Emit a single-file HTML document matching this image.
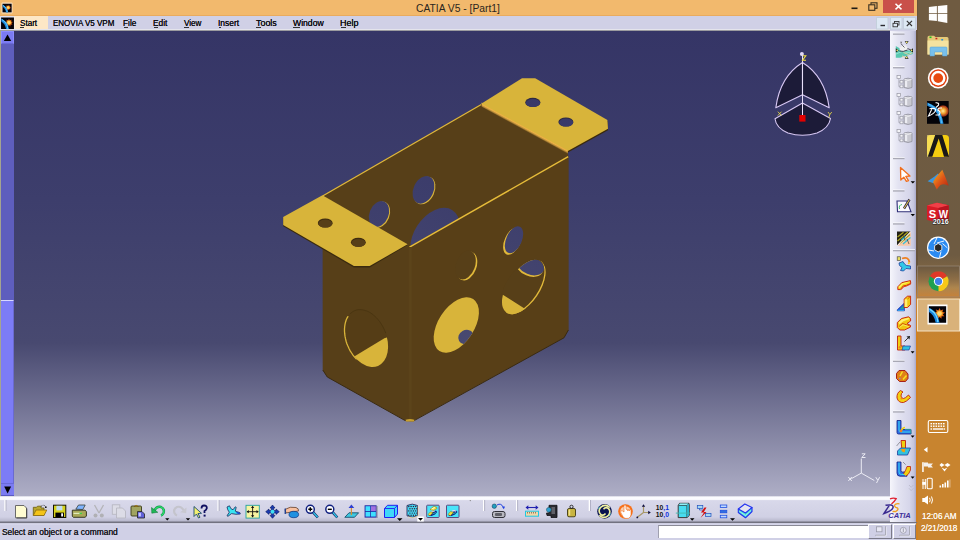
<!DOCTYPE html>
<html><head><meta charset="utf-8">
<style>
*{margin:0;padding:0;box-sizing:border-box}
html,body{width:960px;height:540px;overflow:hidden;background:#d0d0e6;font-family:"Liberation Sans",sans-serif}
.a{position:absolute}
.t{position:absolute;white-space:nowrap;transform-origin:0 0;line-height:1}
#title{left:0;top:0;width:917px;height:16px;background:#f2b96d;border-bottom:1px solid #e9ab5f}
#menubar{left:0;top:16px;width:917px;height:14px;background:#d0d0e6}
#menuline{left:0;top:29px;width:890px;height:2px;background:linear-gradient(#e4e4ec 0,#e4e4ec 0.6px,#a4a4a8 1.2px,#8a8a90 2px)}
.mi{font-size:9.6px;color:#101018;text-shadow:0 0 0.2px #000}
.ul{position:absolute;height:1px;background:#333;top:27px}
#vp{left:14px;top:31px;width:876px;height:465px;background:linear-gradient(to bottom,#353566 0px,#3d3e6c 169px,#484970 312px,#aeaec6 465px)}
#lsb{left:0;top:31px;width:14px;height:465px;background:#5e5ebd;border-left:1px solid #a4a490}
#rtb{left:890px;top:31px;width:26px;height:491px;background:linear-gradient(to right,#f6f6fc 0,#e4e4f2 30%,#d6d6ea 75%,#c4c4dc 92%,#a8a8c8 100%)}
#btb{left:0;top:496px;width:890px;height:27px;background:linear-gradient(to bottom,#b4b4c8 0,#fbfbff 0.8px,#fbfbff 3.4px,#d8d8ea 4.6px,#d0d0e4 21px,#c4c4d8 23px,#b8b8cc 25.2px,#727280 25.8px,#727280 27px)}
#btb2{left:890px;top:521.6px;width:27px;height:1.4px;background:#727280}
#status{left:0;top:523px;width:916px;height:17px;background:linear-gradient(#c8c8da 0,#d6d6ea 1.2px,#d4d4ea 2px,#d0d0e6 2.5px)}
#tbar{left:916px;top:0;width:44px;height:540px;background:linear-gradient(to bottom,#6f5b41 0,#6e5b42 255px,#8a6c44 282px,#c08036 300px,#c8842f 340px,#c8842f 540px)}
#frame{left:914px;top:0;width:3px;height:16px;background:#f2b96d}
</style></head><body>
<div class="a" id="tbar"></div>
<div class="a" style="left:916px;top:0;width:2px;height:540px;background:linear-gradient(to bottom,#66523a 0,#66523a 270px,#c88030 300px,#d08020 340px,#d08020 540px)"></div>
<div class="a" id="title"></div>
<div class="a" id="frame"></div>
<div class="t" style="left:416px;top:4.1px;font-size:10.3px;color:#2a2620">CATIA V5 - [Part1]</div>
<div class="a" style="left:883px;top:0;width:31px;height:13px;background:#c9504a"></div>
<div class="a" id="menubar"></div>
<div class="a" style="left:14px;top:16px;width:34px;height:14px;background:#fde7c6"></div>
<div class="a" id="menuline"></div>
<span class="t mi" style="left:19.5px;top:18.2px;transform:scaleX(0.844)">Start</span>
<span class="t mi" style="left:52.8px;top:18.2px;transform:scaleX(0.834)">ENOVIA V5 VPM</span>
<span class="t mi" style="left:123.4px;top:18.2px;transform:scaleX(0.863)">File</span>
<span class="t mi" style="left:153px;top:18.2px;transform:scaleX(0.872)">Edit</span>
<span class="t mi" style="left:183.8px;top:18.2px;transform:scaleX(0.844)">View</span>
<span class="t mi" style="left:218.1px;top:18.2px;transform:scaleX(0.881)">Insert</span>
<span class="t mi" style="left:255.6px;top:18.2px;transform:scaleX(0.928)">Tools</span>
<span class="t mi" style="left:292.7px;top:18.2px;transform:scaleX(0.900)">Window</span>
<span class="t mi" style="left:340.3px;top:18.2px;transform:scaleX(0.938)">Help</span>
<div class="ul" style="left:20px;width:4px"></div>
<div class="ul" style="left:124px;width:3.5px"></div>
<div class="ul" style="left:153.5px;width:4px"></div>
<div class="ul" style="left:184px;width:5px"></div>
<div class="ul" style="left:219px;width:2px"></div>
<div class="ul" style="left:256px;width:5px"></div>
<div class="ul" style="left:293px;width:7px"></div>
<div class="ul" style="left:341px;width:5px"></div>
<div class="a" id="vp"></div>
<svg class="a" style="left:0;top:0" width="960" height="540" viewBox="0 0 960 540">
<defs>
<linearGradient id="bg" gradientUnits="userSpaceOnUse" x1="0" y1="31" x2="0" y2="496">
<stop offset="0" stop-color="#353566"/><stop offset="0.363" stop-color="#3d3e6c"/><stop offset="0.671" stop-color="#484970"/><stop offset="1" stop-color="#aeaec6"/>
</linearGradient>
<clipPath id="cpA"><ellipse cx="456.3" cy="325" rx="31" ry="18" transform="rotate(-57 456.3 325)"/></clipPath>
<clipPath id="cpD"><ellipse cx="523.8" cy="287" rx="31" ry="16" transform="rotate(-56 523.8 287)"/></clipPath>
<clipPath id="cpE"><ellipse cx="366.3" cy="338.3" rx="20" ry="30" transform="rotate(-23 366.3 338.3)"/></clipPath>
<clipPath id="cpFW"><polygon points="409.5,246.5 568.4,156 568.4,330 564,337.5 415.2,419.6 414,421.2 409.5,421.2"/></clipPath>
</defs>
<!-- interior / body -->
<polygon fill="#573f18" points="322.6,196 481.3,104.5 567.9,152 568.4,157 568.4,330 564,337.5 415.2,419.6 414,421.2 406,421.2 404.8,420.2 327.3,377 322.7,370"/>
<!-- back wall holes -->
<ellipse cx="380" cy="214.6" rx="9.5" ry="13.5" transform="rotate(22 380 214.6)" fill="#d8b43a"/>
<ellipse cx="379" cy="214" rx="9.5" ry="13.5" transform="rotate(22 379 214)" fill="url(#bg)"/>
<ellipse cx="424.5" cy="190.5" rx="10" ry="14.5" transform="rotate(25 424.5 190.5)" fill="#d8b43a"/>
<ellipse cx="423.5" cy="189.8" rx="10" ry="14.5" transform="rotate(25 423.5 189.8)" fill="url(#bg)"/>
<ellipse cx="435" cy="237" rx="21" ry="32" transform="rotate(33 435 237)" fill="url(#bg)"/>
<!-- back wall top edge -->
<polyline points="322.6,196 481.3,104.5" stroke="#e0b83a" stroke-width="1.3" fill="none"/>
<!-- front wall -->
<polygon fill="#583f17" points="409.5,246.5 568.4,156 568.4,330 564,337.5 415.2,419.6 414,421.2 409.5,421.2"/>
<g clip-path="url(#cpFW)">
 <!-- hole A -->
 <ellipse cx="456.3" cy="325" rx="31" ry="18" transform="rotate(-57 456.3 325)" fill="#d8b43a"/>
 <g clip-path="url(#cpA)"><ellipse cx="466" cy="337" rx="8" ry="7" transform="rotate(-30 466 337)" fill="url(#bg)"/></g>
 <!-- hole B crescent -->
 <ellipse cx="467" cy="266" rx="9.5" ry="15" transform="rotate(20 467 266)" fill="#e0b83a"/>
 <ellipse cx="465.5" cy="265" rx="9.5" ry="15" transform="rotate(20 465.5 265)" fill="#573f18"/>
 <!-- hole C -->
 <ellipse cx="512.5" cy="241.2" rx="8" ry="14.5" transform="rotate(24 512.5 241.2)" fill="#e0b83a"/>
 <ellipse cx="514" cy="239.8" rx="7.8" ry="14.3" transform="rotate(24 514 239.8)" fill="url(#bg)"/>
 <!-- hole D -->
 <ellipse cx="523.8" cy="287" rx="31" ry="16" transform="rotate(-56 523.8 287)" fill="#e0b83a"/>
 <ellipse cx="522.6" cy="286.3" rx="31" ry="16" transform="rotate(-56 522.6 286.3)" fill="#573f18"/>
 <g clip-path="url(#cpD)">
  <ellipse cx="529.5" cy="267" rx="14" ry="9" transform="rotate(22 529.5 267)" fill="#e0b83a"/>
  <ellipse cx="530.5" cy="265.5" rx="14" ry="9" transform="rotate(22 530.5 265.5)" fill="url(#bg)"/>
  <polygon points="495,292 501.7,294 523.7,308 530,308 530,330 490,330" fill="#d8b43a"/>
 </g>
</g>
<!-- front wall right edge -->

<!-- front wall top edge -->
<polyline points="409.5,247.2 568.2,156.6" stroke="#e6bc3a" stroke-width="1.4" fill="none"/>
<!-- left face hole E -->
<g clip-path="url(#cpE)">
 <rect x="340" y="300" width="60" height="80" fill="#553d16"/>
 <polygon points="330,372 356.7,355 384.4,338.3 400,333 400,380 330,380" fill="#d8b43a"/>
</g>
<path d="M356.2 358.9 L354.6 357.1 L353.0 355.1 L351.6 353.0 L350.2 350.8 L349.0 348.5 L347.9 346.1 L346.9 343.7 L346.1 341.2 L345.5 338.7 L345.0 336.2 L344.7 333.7 L344.5 331.3 L344.5 328.9 L344.7 326.5 L345.0 324.3 L345.5 322.2 L346.1 320.2 L346.9 318.3 L347.9 316.6" stroke="#d8b43a" stroke-width="1.3" fill="none" stroke-linecap="round"/>
<path d="M350.2 313.6 L351.6 312.5 L353.0 311.5 L354.6 310.7 L356.2 310.1 L358.0 309.7 L359.7 309.6 L361.6 309.7 L363.5 310.0 L365.4 310.5 L367.3 311.2 L369.2 312.1 L371.0 313.2 L372.9 314.6 L374.7 316.1 L376.4 317.7 L378.0 319.5 L379.6 321.5 L381.0 323.6 L382.4 325.8 L383.6 328.1 L384.7 330.5 L385.7 332.9" stroke="#46320f" stroke-width="0.9" fill="none" stroke-linecap="round" opacity="0.8"/>
<!-- front bend shading -->
<rect x="408.6" y="247" width="3.6" height="173" fill="#5b431a"/>
<line x1="410.6" y1="247" x2="410.6" y2="420" stroke="#5f461b" stroke-width="0.7"/>
<!-- bottom edge -->
<polyline points="322.8,370 327.3,377 404.8,420.4 415.2,420 564,337.8 568.4,330" stroke="#3a2a10" stroke-width="1" fill="none"/>
<path d="M405.5 419.8 Q410 418.3 414.5 419.8 L414 421.5 H406 Z" fill="#c8a030"/>
<!-- left flange -->
<polygon fill="#3a2a0e" points="283.2,218 322.4,196 407.6,245 369.7,267.5 353.9,267.5 283.2,226.2"/>
<polygon fill="#d8b43a" points="283.2,217 322.4,195.2 407.6,244.3 369.7,266 353.9,266 283.2,225"/>
<ellipse cx="325.2" cy="223" rx="7.4" ry="4.5" fill="#3e2c10"/>
<ellipse cx="325.4" cy="223.6" rx="7" ry="4" fill="#573f18"/>
<ellipse cx="358.3" cy="242.3" rx="7.4" ry="4.5" fill="#3e2c10"/>
<ellipse cx="358.5" cy="242.9" rx="7" ry="4" fill="#573f18"/>
<!-- right flange -->
<polygon fill="#3a2a0e" points="481.2,104.5 522,79 535.2,79 607.6,121 608,130.2 567.9,152.5"/>
<polygon fill="#d8b43a" points="481.2,103.8 522,78.3 535.2,78.3 607.4,120.1 608,128.8 567.9,151"/>
<linearGradient id="bend" gradientUnits="userSpaceOnUse" x1="525.45" y1="126.9" x2="523.55" y2="130.4"><stop offset="0" stop-color="#d8b43a"/><stop offset="0.3" stop-color="#eeb044"/><stop offset="0.6" stop-color="#b48a3a"/><stop offset="0.85" stop-color="#6a4c18"/><stop offset="1" stop-color="#573f18"/></linearGradient>
<polygon points="481.6,102.6 567.9,149.8 567.9,154.3 481.6,107.1" fill="url(#bend)"/>
<ellipse cx="532.8" cy="102.4" rx="7.6" ry="4.6" fill="#2e2a40"/>
<ellipse cx="533" cy="103" rx="7.2" ry="4" fill="url(#bg)"/>
<ellipse cx="565.9" cy="122" rx="7.5" ry="4.6" fill="#2e2a40"/>
<ellipse cx="566.1" cy="122.6" rx="7.1" ry="4" fill="url(#bg)"/>
</svg><svg class="a" style="left:0;top:0" width="960" height="540" viewBox="0 0 960 540">
<g stroke="#d8c8f4" stroke-width="1.1" fill="#1c1b38" stroke-linejoin="round">
<path d="M775 118.8 L802.5 102.9 L830.5 118.5 Q829 128 817 133 Q802.5 137.5 788 133 Q776 128 775 118.8 Z"/>
<path d="M802.5 62.5 Q780 76.5 775.8 107.8 L802.5 94.8 Z"/>
<path d="M802.5 62.5 Q825 76.5 829.2 107.8 L802.5 94.8 Z"/>
</g>
<path d="M802.5 55 V115.5" stroke="#e8e0fa" stroke-width="1"/>
<circle cx="801.9" cy="54" r="2" fill="#e0d8f8"/>
<rect x="799.3" y="115" width="6.2" height="6.6" fill="#e00000"/>
<path d="M802.8 55.8 H805.8 L802.6 60.2 H806" stroke="#f0e040" stroke-width="1.1" fill="none"/>
<path d="M777.8 111.7 L781.5 115.5 M781.5 111.7 L777.8 115.5" stroke="#f0e040" stroke-width="0.8"/>
<path d="M828 112 L829.8 114.5 L831.8 112 M829.8 114.5 L828.8 117.5" stroke="#f0e040" stroke-width="0.8" fill="none"/>
<!-- small axis -->
<g stroke="#f4f4fa" stroke-width="0.9" fill="none">
<path d="M861.3 473.1 V458.5 M861.3 473.1 L851.3 478.7 M861.3 473.1 L874.3 480.5"/>
<path d="M861.8 453.8 H865.2 L861.8 457.5 H865.5"/>
<path d="M848.3 477 L851.8 481 M851.8 477 L848.3 481"/>
<path d="M875.8 477.2 L877.6 480 M879.6 477.2 L876.5 483"/>
</g>
</svg>
<div class="a" id="lsb"></div>
<div class="a" style="left:1px;top:31px;width:13px;height:13px;background:#7b7bf2;border:1px solid #8c8cff;border-bottom-color:#6a6ad8"></div>
<div class="a" style="left:1px;top:300px;width:12.5px;height:183px;background:#7c7cf6;border-top:1px solid #d8d8ff;border-right:1px solid #6a6ad0"></div>
<div class="a" style="left:1px;top:483px;width:13px;height:13px;background:#7b7bf2;border-top:1px solid #6a6ad8;border-bottom:1px solid #5a5ac0"></div>
<div class="a" id="rtb"></div>
<div class="a" id="btb"></div>
<div class="a" id="btb2"></div>
<div class="a" id="status"></div>
<div class="t" style="left:2px;top:526.6px;font-size:9.6px;color:#202028;text-shadow:0 0 0.25px #000;transform:scaleX(0.875)">Select an object or a command</div>
<div class="a" style="left:658px;top:525px;width:210px;height:13px;background:#fff;border-top:1px solid #8a8a96;border-left:1px solid #a0a0b0"></div>
<div class="a" style="left:868px;top:524px;width:23.5px;height:14.5px;background:#d0d0e6;border:1px solid #fff;border-right-color:#7a7a88;border-bottom-color:#7a7a88"></div>
<div class="a" style="left:892.5px;top:524px;width:23px;height:14.5px;background:#d0d0e6;border:1px solid #fff;border-right-color:#7a7a88;border-bottom-color:#7a7a88"></div>
<div class="t" style="left:922px;top:511.8px;font-size:8.6px;color:#fff8ee;text-shadow:0 0 0.3px #fff;transform:scaleX(0.95)">12:06 AM</div>
<div class="t" style="left:921.2px;top:523.8px;font-size:8.6px;color:#fff8ee;text-shadow:0 0 0.3px #fff;transform:scaleX(0.95)">2/21/2018</div>
<svg class="a" style="left:0;top:0" width="960" height="540" viewBox="0 0 960 540">
<defs>
<radialGradient id="burst" cx="0.5" cy="0.5" r="0.5"><stop offset="0" stop-color="#fff0a0"/><stop offset="0.45" stop-color="#f8a020"/><stop offset="0.8" stop-color="#d04810"/><stop offset="1" stop-color="#802010"/></radialGradient>
<symbol id="cat" viewBox="0 0 14 13">
<rect x="0" y="0" width="14" height="13" fill="#050308"/>
<polygon points="8.60,1.20 9.49,3.36 11.56,2.28 10.85,4.50 13.13,5.00 11.16,6.25 12.58,8.10 10.27,7.79 10.17,10.12 8.60,8.40 7.03,10.12 6.93,7.79 4.62,8.10 6.04,6.25 4.07,5.00 6.35,4.50 5.64,2.28 7.71,3.36" fill="url(#burst)"/>
<circle cx="8.6" cy="5.8" r="1.7" fill="#ffd870"/>
<path d="M0.3 1.2 Q5 3.5 6.8 7 Q8 9.5 8.6 13 L5.6 13 Q4.8 9.5 3.5 7.5 Q2 5.5 0.3 4.5 Z" fill="#1a88e0"/>
<path d="M0.8 2.3 Q4.5 4.5 6 7.5 Q7 9.5 7.3 12.5" stroke="#70d8ff" stroke-width="1" fill="none"/>
</symbol>
</defs>
<!-- title icon -->
<rect x="1.5" y="2.5" width="11" height="11" fill="#f8e0c0" rx="1"/>
<use href="#cat" x="2.3" y="3.3" width="9.5" height="9.5"/>
<!-- menu icon -->
<rect x="0.5" y="16.5" width="14" height="13.5" fill="#f0f0f8"/>
<use href="#cat" x="1" y="17.3" width="13" height="12"/>
<!-- title buttons -->
<rect x="851.5" y="7.5" width="6" height="1.6" fill="#1e1a14"/>
<rect x="871" y="2.8" width="6" height="5.5" fill="none" stroke="#3a3020" stroke-width="1.1"/>
<rect x="868.8" y="4.8" width="6" height="5.5" fill="#f2b96d" stroke="#3a3020" stroke-width="1.1"/>
<path d="M895.5 3.8 L901.5 9.4 M901.5 3.8 L895.5 9.4" stroke="#fff" stroke-width="1.5"/>
<!-- MDI buttons -->
<g fill="#dde8f4" stroke="#c4d0dc" stroke-width="1">
<rect x="876.5" y="17.5" width="11.5" height="11.5"/>
<rect x="890.5" y="17.5" width="11.5" height="11.5"/>
<rect x="903.5" y="17.5" width="12" height="11.5"/>
</g>
<rect x="880.5" y="24.8" width="4.5" height="1.4" fill="#2a2a30"/>
<rect x="894.5" y="21.5" width="4.5" height="3.5" fill="none" stroke="#333" stroke-width="0.9"/>
<rect x="893" y="23.3" width="4.5" height="3.5" fill="#dde8f4" stroke="#333" stroke-width="0.9"/>
<path d="M906.8 20.8 L912 26 M912 20.8 L906.8 26" stroke="#333" stroke-width="1.1"/>
<!-- scrollbar arrows -->
<path d="M7.5 34.5 L11.2 41 L3.8 41 Z" fill="#000"/>
<path d="M4.2 486.4 L11.1 486.4 L7.6 493.6 Z" fill="#000"/>
</svg>
<svg class="a" style="left:0;top:0" width="960" height="540" viewBox="0 0 960 540">
<g id="btbicons">
<!-- handle -->
<rect x="4.3" y="500" width="1.6" height="11" fill="#fff"/><rect x="5.6" y="500" width="0.8" height="11" fill="#a8a8bc"/>
<!-- new doc -->
<path d="M15.5 505.5 H24 L26.5 508 V517.8 H15.5 Z" fill="#fffcd2" stroke="#6a6a6a" stroke-width="1"/>
<path d="M16.5 518 H26.8 V508.5" stroke="#3a3a3a" stroke-width="0.8" fill="none"/>
<!-- open folder -->
<path d="M33.3 507.3 H36.5 L37.5 506.2 H41 V508 H44 V515.3 H33.3 Z" fill="#b8a830" stroke="#6a5a10" stroke-width="0.8"/>
<path d="M33.3 515.5 L36 510 H46.8 L44 515.5 Z" fill="#f4c418" stroke="#8a6a10" stroke-width="0.8"/>
<path d="M41 506.5 Q43.5 504 45.5 506.5" stroke="#222" stroke-width="0.8" fill="none" stroke-dasharray="1 0.8"/>
<circle cx="45.8" cy="507.2" r="0.9" fill="#111"/>
<!-- save -->
<rect x="53.5" y="505.2" width="12.3" height="12.3" fill="#d6d21c" stroke="#141400" stroke-width="1"/>
<rect x="56.4" y="505.8" width="6" height="4.6" fill="#c0dcf0"/>
<rect x="55.4" y="512.6" width="8.6" height="4.5" fill="#000"/>
<rect x="61.2" y="513.3" width="1.8" height="3.2" fill="#fff"/>
<!-- print -->
<path d="M75.8 509.2 L78.5 505 H85.2 L82.8 509.5 Z" fill="#80b4ff" stroke="#38403a" stroke-width="0.8"/>
<path d="M72.3 510.2 H85 L86.4 511.5 V516.2 L85 517.3 H73.3 L72.3 516.2 Z" fill="#a8a858" stroke="#2a2a16" stroke-width="0.9"/>
<rect x="73.5" y="512.8" width="8" height="1.1" fill="#e8f0c8"/><rect x="79.5" y="512.8" width="2.5" height="1.1" fill="#30d040"/>
<!-- cut gray -->
<path d="M94.5 505 L99 513 M103.5 505 L99 513" stroke="#b4b4b8" stroke-width="1.3" fill="none"/>
<circle cx="95.5" cy="515.5" r="2" fill="#b0b0b4"/><circle cx="101.8" cy="515.5" r="2" fill="#b0b0b4"/>
<!-- copy gray -->
<rect x="112.3" y="504.8" width="7.5" height="9.5" fill="#dcdce6" stroke="#b8b8c2" stroke-width="0.9"/>
<path d="M116.5 508 H122.5 L125.5 511 V518 H116.5 Z" fill="#dcdce6" stroke="#b8b8c2" stroke-width="0.9"/>
<!-- paste -->
<rect x="131" y="506" width="10.5" height="10" rx="1" fill="#a0a460" stroke="#3a3a18" stroke-width="0.9"/>
<path d="M134 506.5 Q136 504.2 138.5 506.5 Z" fill="#e0b020" stroke="#6a5010" stroke-width="0.6"/>
<path d="M137.5 511.5 H142 L144.5 514 V518 H137.5 Z" fill="#6060d8" stroke="#222" stroke-width="0.8"/>
<rect x="138.6" y="512.8" width="2.3" height="3.6" fill="#c8c8ff"/>
<!-- undo -->
<path d="M154.2 510.5 Q157 505.8 161 507 Q165 509 163.5 513 Q162.5 515 161 515.5" stroke="#109848" stroke-width="2.4" fill="none"/>
<path d="M154.2 510.5 Q157 505.8 161 507 Q165 509 163.5 513 Q162.5 515 161 515.5" stroke="#30e070" stroke-width="1.2" fill="none"/>
<path d="M151.5 507.5 L157.8 512.3 L151.8 513.2 Z" fill="#20b858" stroke="#0a7030" stroke-width="0.5"/>
<path d="M165.2 518.3 H169.4 L167.3 520.6 Z" fill="#000"/>
<!-- redo gray -->
<path d="M184 510.5 Q181 505.8 177 507 Q173 509 174.5 513 Q175.5 515 177 515.5" stroke="#c4c4cc" stroke-width="2.2" fill="none"/>
<path d="M186.5 507.5 L180.2 512.3 L186.2 513.2 Z" fill="#c8c8d0"/>
<path d="M185.8 518.3 H190.2 L188 520.6 Z" fill="#000"/>
<!-- what's this -->
<path d="M194 506.5 L194 516.5 L196.5 514 L198.5 518 L200 517.2 L198 513.5 L201.5 513.3 Z" fill="#f4f070" stroke="#1a4a70" stroke-width="0.9"/>
<path d="M201.5 508.5 Q201.5 505.5 204 505.5 Q207 505.5 206.8 508.2 Q206.5 510 204.5 511 V513" stroke="#101060" stroke-width="1.8" fill="none"/>
<rect x="203.6" y="514.6" width="2" height="2" fill="#101060"/>
<!-- separator -->
<rect x="217.4" y="500" width="1.3" height="11" fill="#fff"/><rect x="218.7" y="500" width="0.8" height="11" fill="#a8a8bc"/>
<!-- fly -->
<path d="M227 507 L229.5 505.8 L230.8 508.5 L233 509.8 L235.3 506.8 L236.2 507.3 L235.3 511.2 L239.8 512.6 L240.3 514 L236 514.3 L231.5 513.6 L228 516.3 L227 515.8 L229.3 512.2 L227.8 509.8 Z" fill="#38e4f0" stroke="#1a2a60" stroke-width="0.8" stroke-linejoin="round"/>
<path d="M236.5 512.5 L239.5 513.5" stroke="#1020e0" stroke-width="1.2"/>
<!-- fit all -->
<rect x="246" y="505.3" width="13.3" height="12.8" fill="#f8f4a0" stroke="#20a0a0" stroke-width="0.9"/>
<path d="M252.6 506.5 V517 M247 511.7 H258.2" stroke="#111" stroke-width="0.9"/>
<path d="M252.6 505.8 L251 508 H254.2 Z M252.6 517.6 L251 515.3 H254.2 Z M246.6 511.7 L248.8 510.1 V513.3 Z M258.7 511.7 L256.5 510.1 V513.3 Z" fill="#111"/>
<!-- pan -->
<path d="M272.5 505 L275 508 H273.6 V510.5 H276 V509 L279.3 511.7 L276 514.4 V513 H273.6 V515.4 H275 L272.5 518.3 L270 515.4 H271.4 V513 H269 V514.4 L265.7 511.7 L269 509 V510.5 H271.4 V508 H270 Z" fill="#1a3ab0" stroke="#0a1a60" stroke-width="0.6"/>
<circle cx="272.5" cy="511.7" r="2" fill="#40e0f0"/>
<!-- rotate -->
<path d="M285 509.5 Q290 506 296 507.5 Q299 508.5 298.5 511 L291 512 L286 513 Z" fill="#f8c0a0" stroke="#604030" stroke-width="0.8"/>
<ellipse cx="293.8" cy="514.5" rx="4.8" ry="3.2" fill="#2090e0" stroke="#0a3080" stroke-width="0.7"/>
<rect x="284.6" y="508.5" width="1.3" height="5.5" fill="#1a3a90"/>
<!-- zoom in -->
<circle cx="310.3" cy="509.3" r="4" fill="#fff" stroke="#102080" stroke-width="1.5"/>
<path d="M313.2 512.3 L317.8 517.5" stroke="#102060" stroke-width="2.6"/><path d="M313.4 512.5 L317.6 517.3" stroke="#30c8e8" stroke-width="1.3"/>
<path d="M308.3 509.3 H312.3 M310.3 507.3 V511.3" stroke="#000" stroke-width="1.4"/>
<!-- zoom out -->
<circle cx="329.8" cy="509.3" r="4" fill="#fff" stroke="#102080" stroke-width="1.5"/>
<path d="M332.7 512.3 L337.3 517.5" stroke="#102060" stroke-width="2.6"/><path d="M332.9 512.5 L337.1 517.3" stroke="#30c8e8" stroke-width="1.3"/>
<path d="M327.8 509.3 H331.8" stroke="#000" stroke-width="1.4"/>
<!-- normal view -->
<path d="M344.8 517.3 L349 512.8 H358.6 L354.5 517.3 Z" fill="#40c8e0" stroke="#0a4060" stroke-width="0.8"/>
<path d="M351.4 515 V506" stroke="#d89030" stroke-width="1.2"/>
<path d="M351.4 504.5 L348.5 508 H354.3 Z" fill="#3040d0"/>
<!-- multi view -->
<rect x="364.6" y="505.3" width="12" height="12.3" fill="#2020a0"/>
<rect x="365.5" y="506.2" width="4.8" height="4.8" fill="#40e0ff"/><rect x="371" y="506.2" width="4.8" height="4.8" fill="#a070e0"/>
<rect x="365.5" y="511.8" width="4.8" height="4.8" fill="#40e0ff"/><rect x="371" y="511.8" width="4.8" height="4.8" fill="#40e0ff"/>
<rect x="376.6" y="506" width="0.9" height="12" fill="#808090"/>
<!-- iso view cube -->
<path d="M384.5 508.5 L387.5 505.3 H397.5 V514 L394.5 517.5 H384.5 Z" fill="#40d8f8" stroke="#2020f0" stroke-width="1"/>
<path d="M384.5 508.5 H394.5 V517.5 M394.5 508.5 L397.5 505.3" stroke="#2020f0" stroke-width="0.9" fill="none"/>
<path d="M397 518.3 H402.5 L399.8 521 Z" fill="#000"/>
<!-- render style -->
<path d="M407 505.5 Q412.3 502.8 417.5 505.5 V515.8 Q412.3 518.5 407 515.8 Z" fill="#40d8f4" stroke="#302858" stroke-width="0.9"/>
<g fill="#3a1a30"><circle cx="408.80" cy="506.5" r="0.7"/><circle cx="411.10" cy="506.5" r="0.7"/><circle cx="413.40" cy="506.5" r="0.7"/><circle cx="415.70" cy="506.5" r="0.7"/><circle cx="409.95" cy="508.7" r="0.7"/><circle cx="412.25" cy="508.7" r="0.7"/><circle cx="414.55" cy="508.7" r="0.7"/><circle cx="416.85" cy="508.7" r="0.7"/><circle cx="408.80" cy="510.9" r="0.7"/><circle cx="411.10" cy="510.9" r="0.7"/><circle cx="413.40" cy="510.9" r="0.7"/><circle cx="415.70" cy="510.9" r="0.7"/><circle cx="409.95" cy="513.1" r="0.7"/><circle cx="412.25" cy="513.1" r="0.7"/><circle cx="414.55" cy="513.1" r="0.7"/><circle cx="416.85" cy="513.1" r="0.7"/><circle cx="408.80" cy="515.3" r="0.7"/><circle cx="411.10" cy="515.3" r="0.7"/><circle cx="413.40" cy="515.3" r="0.7"/><circle cx="415.70" cy="515.3" r="0.7"/></g>
<path d="M418.2 506 V516 Q413 519 408 517" stroke="#f0e0a0" stroke-width="0.7" fill="none"/>
<rect x="417.3" y="516.5" width="6.5" height="5" fill="#fff"/>
<path d="M418 518 H423 L420.5 520.7 Z" fill="#000"/>
<!-- hide/show -->
<rect x="426.7" y="505.2" width="12.5" height="12.3" rx="0.8" fill="#48e4fa" stroke="#5a4a80" stroke-width="1"/>
<path d="M431 512.5 L436 510.5 L437.2 512 L435 514.5 L431.5 516 L428.5 516 Z" fill="#10208a"/>
<path d="M432.5 514 L436 512.5" stroke="#20b0b0" stroke-width="1"/>
<path d="M431.5 511.5 Q433 510.2 434.5 511.5" stroke="#f0d8f0" stroke-width="1.1" fill="none"/>
<path d="M428 514.5 L430.5 511.8 L433 512.5 L430 515.8 Z" fill="#f0e040" stroke="#807010" stroke-width="0.5"/>
<path d="M430 509.5 L433.5 506.5 L436.5 507 L437 508.5 L433.5 510.5 Z" fill="#f0e040" stroke="#807010" stroke-width="0.5"/>
<path d="M431.5 509 L435 507.5" stroke="#fff" stroke-width="0.8"/>
<!-- swap -->
<rect x="446.5" y="505.2" width="12.5" height="12.3" rx="0.8" fill="#48e4fa" stroke="#5a4a80" stroke-width="1"/>
<path d="M451.5 512 L456 510.5 L457.5 512 L455 514.5 L451.5 516 L448.5 516 Z" fill="#10208a"/>
<path d="M452.5 514 L456 512.5" stroke="#20b0b0" stroke-width="1"/>
<path d="M452 511.3 Q454 510 456 511.3" stroke="#f0d8f0" stroke-width="1.1" fill="none"/>
<path d="M448 514.5 L450.5 511.5 L453.5 512.3 L450.5 515.8 Z" fill="#f0e040" stroke="#807010" stroke-width="0.5"/>
<circle cx="470.3" cy="500.6" r="0.7" fill="#888"/>
<!-- separator -->
<rect x="483" y="500" width="1.3" height="11" fill="#fff"/><rect x="484.3" y="500" width="0.8" height="11" fill="#a8a8bc"/>
<!-- sphere arrow box -->
<rect x="492.5" y="511.5" width="12.5" height="6" rx="2" fill="#b8b8c0" stroke="#303038" stroke-width="1"/>
<rect x="495" y="513" width="7" height="3" rx="1" fill="#606068"/>
<circle cx="494.3" cy="506.2" r="2.2" fill="#20a0c0" stroke="#103050" stroke-width="0.5"/>
<path d="M497 505 Q501 502.5 503.5 507.5" stroke="#2040e0" stroke-width="1" fill="none"/>
<path d="M502 506.8 L505 506.5 L503.8 509.3 Z" fill="#2040e0"/>
<!-- separator -->
<rect x="516" y="500" width="1.3" height="11" fill="#fff"/><rect x="517.3" y="500" width="0.8" height="11" fill="#a8a8bc"/>
<!-- measure -->
<path d="M526.5 507.5 H537.5" stroke="#2020b0" stroke-width="1.1"/>
<path d="M525.5 507.5 L528.3 505.3 V509.7 Z M538.5 507.5 L535.7 505.3 V509.7 Z" fill="#2020b0"/>
<rect x="525.5" y="511.2" width="13" height="5" fill="#f0d8a8" stroke="#20c8e0" stroke-width="1"/>
<path d="M527.5 512 V513.5 M529.5 512 V513.5 M531.5 512 V513.5 M533.5 512 V513.5 M535.5 512 V513.5" stroke="#604030" stroke-width="0.6"/>
<!-- dark box globe -->
<path d="M549 505.3 H557 V517.5 H551 V515.5 H547 L546.5 513 H549 Z" fill="#2a2a30" stroke="#101014" stroke-width="0.8"/>
<rect x="551.5" y="507" width="3.5" height="7" fill="#606068"/>
<circle cx="548.8" cy="509.8" r="2.4" fill="#30a0d0" stroke="#205060" stroke-width="0.5"/>
<!-- weight -->
<rect x="567.5" y="508.5" width="8" height="8.3" rx="1.5" fill="#c8b440" stroke="#403810" stroke-width="0.9"/>
<circle cx="571.5" cy="506.8" r="1.6" fill="none" stroke="#222" stroke-width="0.9"/>
<rect x="568.7" y="509.5" width="1.5" height="6" fill="#f0e090"/>
<!-- separator -->
<rect x="588.7" y="500" width="1.3" height="11" fill="#fff"/><rect x="590" y="500" width="0.8" height="11" fill="#a8a8bc"/>
<!-- swirl -->
<circle cx="604.5" cy="511.4" r="7.3" fill="#0a1450"/>
<path d="M609.8 507.5 Q605 503.3 600.5 507.5 Q597.6 511.5 600.8 514.5 Q603.5 516.3 605.5 513.5" stroke="#f0f0a0" stroke-width="1.6" fill="none"/>
<path d="M599.3 515.3 Q604 519.5 608.5 515.3 Q611.4 511.3 608.2 508.3 Q605.5 506.5 603.5 509.3" stroke="#f0f0a0" stroke-width="1.6" fill="none"/>
<path d="M598.5 509 Q599 507.5 600 506.5 M610.5 513.5 Q610 515 609 516" stroke="#60e0e0" stroke-width="0.8" fill="none"/>
<!-- hand orange -->
<circle cx="625.5" cy="511.5" r="7.3" fill="#f87018"/>
<circle cx="625.5" cy="511.5" r="5.2" fill="#fbd0b0"/>
<path d="M624 505.5 V512 L622.3 510.8 Q620.5 510.3 620.5 512 L623.5 517.5 Q625.5 519 628.5 518.3 Q631 517.3 631 514.5 V510.5 Q630.5 509.3 629.3 509.8 V511 Q629 509.2 627.8 509.5 V510.8 Q627.3 508.8 626 509.2 V505.5 Q625 504.5 624 505.5 Z" fill="#fff" stroke="#f07020" stroke-width="0.6"/>
<!-- axis -->
<path d="M643.5 512.5 V505.5 M643.5 512.5 L637 517.5 M643.5 512.5 L650 512.5" stroke="#a89868" stroke-width="1.2"/>
<path d="M643.5 504.2 L641.8 506.8 H645.2 Z M650.8 512.5 L648.2 510.8 V514.2 Z" fill="#101040"/><circle cx="637.3" cy="517.4" r="0.9" fill="#101040"/>
<!-- 10,1 10,0 -->
<text x="655.8" y="509.6" font-size="7.4" font-weight="bold" fill="#101010" font-family="Liberation Sans" textLength="13.2" lengthAdjust="spacingAndGlyphs">10<tspan fill="#1030e0">,1</tspan></text>
<text x="655.8" y="516.6" font-size="7.4" font-weight="bold" fill="#101010" font-family="Liberation Sans" textLength="13.2" lengthAdjust="spacingAndGlyphs">10<tspan fill="#1030e0">,0</tspan></text>
<!-- cube cyan -->
<path d="M678.2 505.5 L679.5 503.3 H689 L689.3 504.5 V515.5 L687 517.6 H678.2 Z" fill="#48dcf0" stroke="#302828" stroke-width="0.9" stroke-linejoin="round"/>
<path d="M678.5 505.5 H686.8 V517.3 M686.8 505.5 L689 503.5" stroke="#303838" stroke-width="0.7" fill="none"/>
<path d="M686.9 505.8 L689 503.8 V515.3 L686.9 517.2 Z" fill="#30b0c8"/>
<path d="M679.3 504.4 L680 503.6 H688.5 L686.5 505 H679.3 Z" fill="#90f0f8"/>
<path d="M675.8 513.1 H690" stroke="#40b8b0" stroke-width="0.9"/>
<path d="M690 518.3 H694.5 L692.2 520.8 Z" fill="#000"/>
<!-- tree red -->
<rect x="697.3" y="505.5" width="5.5" height="3" fill="#a8d8f0" stroke="#2050c0" stroke-width="0.7"/>
<rect x="705.5" y="513.5" width="5.5" height="3" fill="#a8d8f0" stroke="#2050c0" stroke-width="0.7"/>
<path d="M699.5 508.5 V510 H703" stroke="#2050c0" stroke-width="0.7" fill="none"/>
<path d="M704.5 507.5 L701 512.5 H704 L700.5 518 L706.5 512 H703.8 L706.5 507.5 Z" fill="#d01010"/>
<!-- list -->
<rect x="720.3" y="505" width="6.5" height="2.5" fill="#c0d8ff" stroke="#2050e0" stroke-width="0.8"/>
<rect x="720.3" y="510.3" width="6.5" height="2.5" fill="#3070e0" stroke="#2050e0" stroke-width="0.8"/>
<rect x="720.3" y="515.3" width="6.5" height="2.5" fill="#c0d8ff" stroke="#2050e0" stroke-width="0.8"/>
<path d="M730 518.3 H735 L732.5 520.8 Z" fill="#000"/>
<!-- book -->
<path d="M738.3 509 V512.5 L745.5 517.8 L752 511.5 V507.5 Z" fill="#50e0d8" stroke="#2030f0" stroke-width="1.1" stroke-linejoin="round"/>
<path d="M738.3 509 L744.8 504 L752 507.5 L745.5 513 Z" fill="#e4e4f0" stroke="#2030f0" stroke-width="1.1" stroke-linejoin="round"/>
<path d="M739.5 511.5 L745.5 515.5 L751 510.5" stroke="#b0f8f0" stroke-width="0.7" fill="none"/>
</g>
</svg>
<svg class="a" style="left:0;top:0" width="960" height="540" viewBox="0 0 960 540">
<g fill="#fdfdff"><rect x="893" y="32.7" width="11.5" height="0.8"/><rect x="893" y="66.3" width="11.5" height="0.8"/><rect x="893" y="157.1" width="11.5" height="0.8"/><rect x="893" y="189.5" width="11.5" height="0.8"/><rect x="893" y="222.5" width="11.5" height="0.8"/><rect x="893" y="359.9" width="11.5" height="0.8"/><rect x="893" y="410.5" width="11.5" height="0.8"/><rect x="893" y="249.3" width="22" height="0.8"/></g>
<g fill="#a8a8b4"><rect x="893" y="33.5" width="11.5" height="1.3"/><rect x="893" y="67.1" width="11.5" height="1.3"/><rect x="893" y="157.9" width="11.5" height="1.3"/><rect x="893" y="190.3" width="11.5" height="1.3"/><rect x="893" y="223.3" width="11.5" height="1.3"/><rect x="893" y="360.7" width="11.5" height="1.3"/><rect x="893" y="411.3" width="11.5" height="1.3"/><rect x="893" y="250.1" width="22" height="1.2"/></g>
<!-- icon 1 compass surface -->
<path d="M895.8 46 L900 48.5 L905 50.5 L912.8 50.5 L912.8 54 L906 56 L900 57.8 L895.8 57.8 Z" fill="#58c8b0"/>
<path d="M896 54 L902 51.5 L908 52.5 L912.5 52" stroke="#a0e8d8" stroke-width="0.8" fill="none"/>
<path d="M903.5 52.5 L908.5 54.5 L912.5 52.5 M902 56 L906 57.5" stroke="#e8d0a0" stroke-width="0.9" fill="none"/>
<path d="M899.3 49 Q901.5 45 905.5 45.3 Q907.8 46.5 907.5 49.5 Q905 51.5 901 51.2 Z" fill="#f0f0f0"/>
<path d="M899.5 51 Q903 52.3 907.5 50" stroke="#303040" stroke-width="0.9" fill="none"/>
<path d="M901 43.5 L902.5 45.5 L904.5 47.5" stroke="#505058" stroke-width="0.9" fill="none"/>
<path d="M907.5 48.5 L911 50" stroke="#404048" stroke-width="0.9"/>
<g fill="#1a1a18">
<path d="M904.7 41.3 H908.7 L906.7 44 Z"/><path d="M904.7 58.8 H908.7 L906.7 55.8 Z"/>
<path d="M895.8 48.3 V52.5 L898.8 50.4 Z"/><path d="M913 48.3 V52.5 L910 50.4 Z"/>
<path d="M900 41.8 H902.3 L901.2 43.6 Z" opacity="0.6"/>
</g>
<g fill="#f0e870"><circle cx="906.7" cy="42.4" r="0.8"/><circle cx="906.7" cy="57.4" r="0.8"/><circle cx="897.2" cy="50.4" r="0.8"/><circle cx="911.6" cy="50.4" r="0.8"/></g>
<!-- gray icons -->
<g transform="translate(0 75)">
<rect x="897" y="0.5" width="3.6" height="3" fill="#f4f4f8" stroke="#9898a4" stroke-width="0.7"/>
<path d="M898.8 3.5 V11.5 H900.5 M898.8 7 H900.5" stroke="#a8a8b4" stroke-width="0.7" fill="none"/>
<rect x="900" y="5.3" width="3" height="2.8" fill="#f4f4f8" stroke="#9898a4" stroke-width="0.7"/>
<rect x="900" y="10" width="3" height="2.8" fill="#f4f4f8" stroke="#9898a4" stroke-width="0.7"/>
<path d="M904 4 Q908 2.3 912 4 V12.5 Q908 14.5 904 12.5 Z" fill="#c8c8d0" stroke="#888894" stroke-width="0.7"/>
<path d="M904.5 4.5 Q908 6 911.5 4.5" stroke="#fff" stroke-width="0.8" fill="none"/>
<rect x="905" y="6" width="2.2" height="6" fill="#ececf2"/>
</g>
<g transform="translate(0 93)">
<rect x="897" y="0.5" width="3.6" height="3" fill="#f4f4f8" stroke="#9898a4" stroke-width="0.7"/>
<path d="M898.8 3.5 V11.5 H900.5 M898.8 7 H900.5" stroke="#a8a8b4" stroke-width="0.7" fill="none"/>
<rect x="900" y="5.3" width="3" height="2.8" fill="#f4f4f8" stroke="#9898a4" stroke-width="0.7"/>
<rect x="900" y="10" width="3" height="2.8" fill="#f4f4f8" stroke="#9898a4" stroke-width="0.7"/>
<path d="M904 4 Q908 2.3 912 4 V12.5 Q908 14.5 904 12.5 Z" fill="#c8c8d0" stroke="#888894" stroke-width="0.7"/>
<path d="M904.5 4.5 Q908 6 911.5 4.5" stroke="#fff" stroke-width="0.8" fill="none"/>
<rect x="905" y="6" width="2.2" height="6" fill="#ececf2"/>
</g>
<g transform="translate(0 111)">
<rect x="897" y="0.5" width="3.6" height="3" fill="#f4f4f8" stroke="#9898a4" stroke-width="0.7"/>
<path d="M898.8 3.5 V11.5 H900.5 M898.8 7 H900.5" stroke="#a8a8b4" stroke-width="0.7" fill="none"/>
<rect x="900" y="5.3" width="3" height="2.8" fill="#f4f4f8" stroke="#9898a4" stroke-width="0.7"/>
<rect x="900" y="10" width="3" height="2.8" fill="#f4f4f8" stroke="#9898a4" stroke-width="0.7"/>
<path d="M904 4 Q908 2.3 912 4 V12.5 Q908 14.5 904 12.5 Z" fill="#c8c8d0" stroke="#888894" stroke-width="0.7"/>
<path d="M904.5 4.5 Q908 6 911.5 4.5" stroke="#fff" stroke-width="0.8" fill="none"/>
<rect x="905" y="6" width="2.2" height="6" fill="#ececf2"/>
</g>
<g transform="translate(0 129)">
<rect x="897" y="0.5" width="3.6" height="3" fill="#f4f4f8" stroke="#9898a4" stroke-width="0.7"/>
<path d="M898.8 3.5 V11.5 H900.5 M898.8 7 H900.5" stroke="#a8a8b4" stroke-width="0.7" fill="none"/>
<rect x="900" y="5.3" width="3" height="2.8" fill="#f4f4f8" stroke="#9898a4" stroke-width="0.7"/>
<rect x="900" y="10" width="3" height="2.8" fill="#f4f4f8" stroke="#9898a4" stroke-width="0.7"/>
<path d="M904 4 Q908 2.3 912 4 V12.5 Q908 14.5 904 12.5 Z" fill="#c8c8d0" stroke="#888894" stroke-width="0.7"/>
<path d="M904.5 4.5 Q908 6 911.5 4.5" stroke="#fff" stroke-width="0.8" fill="none"/>
<rect x="905" y="6" width="2.2" height="6" fill="#ececf2"/>
</g>
<!-- cursor -->
<path d="M900.5 167.5 L910 176 L905.8 176.3 L908.5 180.6 L906.4 181.4 L903.8 177.2 L900.8 180 Z" fill="#fff" stroke="#f07020" stroke-width="1.3" stroke-linejoin="round"/>
<path d="M910.6 181.2 H915 L912.8 183.5 Z" fill="#000"/>
<!-- sketch -->
<path d="M897 201 H907 L911 211.8 H897.5 Z" fill="#fbfbff" stroke="#303078" stroke-width="1.1"/>
<path d="M904 208.5 L909.5 199.5" stroke="#302848" stroke-width="2.4"/>
<path d="M904.1 208.3 L909.4 199.7" stroke="#e8d050" stroke-width="1"/>
<path d="M899.5 209 Q898.5 205 902 204.5" stroke="#40c070" stroke-width="1" fill="none"/>
<path d="M910.6 214 H915 L912.8 216.2 Z" fill="#000"/>
<!-- checker -->
<path d="M897 231.5 H910.8 L897 245.8 Z" fill="#222018"/>
<path d="M910.8 231.5 V245.8 H897 Z" fill="#f8c8a8"/>
<path d="M897.5 241 L908 232 M897.5 237 L903.5 232.3 M900 243 L910 234.5" stroke="#a8a020" stroke-width="1.3"/>
<path d="M897 245.8 L910.8 231.5" stroke="#fff" stroke-width="0.9"/>
<path d="M903 244 L910.5 237.5 M901.5 240 L905.5 236.5" stroke="#30c0d8" stroke-width="1.2"/>
<path d="M903.5 235.5 L905 240.5 M907 239 L909 244" stroke="#222" stroke-width="0.6"/>
<!-- wrench -->
<rect x="897.2" y="256.8" width="3.2" height="3.6" fill="#e8e060" stroke="#404040" stroke-width="0.6"/>
<path d="M902 258.5 Q908.5 256 909.5 262.5" stroke="#f08020" stroke-width="1.8" fill="none"/>
<circle cx="908.8" cy="263.2" r="1" fill="#f0d020"/>
<path d="M899 263 L903 261.5 L904.5 264 L906.5 265.5 L910.5 266 L910.5 269 L906 268.5 L903.5 271 L900.5 270.5 L902 267.5 L899.5 265.5 Z" fill="#30c8e8" stroke="#2040a0" stroke-width="0.8" stroke-linejoin="round"/>
<!-- wall -->
<path d="M897.8 286.8 L901.8 282.6 L910.4 280.6 L910.8 283.4 L906.3 285.4 L903.3 285.9 L900.3 289.6 L897.8 289.6 Z" fill="#f4d818" stroke="#c81808" stroke-width="0.9" stroke-linejoin="round"/>
<path d="M898.3 287 L902.2 283.2 L909.8 281.4 L906 283.6 L902.8 284.3 L899.8 288 Z" fill="#fff060"/>
<path d="M900.5 289.5 L903.5 286.2 L906.5 285.6 L910.8 283.6 V284.5 L906.5 286.5 L903.8 287.2 L900.8 290.3 Z" fill="#e04010"/>
<!-- flange -->
<path d="M897.3 309.8 L904.4 303 V310.8 H897.3 Z" fill="#2050e8" stroke="#1030a0" stroke-width="0.7" stroke-linejoin="round"/>
<path d="M899.2 309.3 L903.8 305 V309.3 Z" fill="#20a0a0"/>
<path d="M897.6 310.3 H904" stroke="#40d0ff" stroke-width="0.8"/>
<path d="M904.2 299 L907.5 296.2 H910.6 V304.5 L907.5 307.5 H904.2 Z" fill="#f0c810" stroke="#c81808" stroke-width="0.9" stroke-linejoin="round"/>
<path d="M904.6 299.3 H907.3 V307 H904.6 Z" fill="#fff070"/>
<path d="M907.5 299 L910.4 296.4" stroke="#c81808" stroke-width="0.6"/>
<!-- hem -->
<path d="M897.3 322.5 L901.5 318.5 L908.5 316.8 L910.6 318.6 V321 L907 323.5 L910.6 325.5 L910.3 327.2 L904.5 330 H899.8 L897.3 327.5 Z" fill="#f0c810" stroke="#c81808" stroke-width="0.9" stroke-linejoin="round"/>
<path d="M898.5 322.5 L902 319.3 L908.3 317.8 L909.6 319 L903.3 321.2 L899.5 324.3 Z" fill="#fff070"/>
<path d="M899.2 326.3 L902.5 323.5 L909.5 325.8" stroke="#c81808" stroke-width="0.7" fill="none"/>
<path d="M899.5 327.5 L903 324.8 L908.8 326.5" stroke="#fff070" stroke-width="0.8" fill="none"/>
<!-- L arrow -->
<path d="M897.5 336 H901 V346 H905 V350 H897.5 Z" fill="#f0d010" stroke="#c02010" stroke-width="0.9"/>
<path d="M903 346 H910.5 L909 350 H902 Z" fill="#30c0e0" stroke="#2040a0" stroke-width="0.7"/>
<path d="M904.5 341.5 L909.5 336.5" stroke="#222" stroke-width="0.9"/>
<path d="M910 336 L906.5 336.5 L909.5 339.5 Z" fill="#222"/>
<circle cx="900" cy="347.3" r="1.3" fill="#f08020"/>
<path d="M910.7 351.3 H914.5 L912.6 353.5 Z" fill="#000"/>
<!-- round -->
<path d="M899 370.5 H905 L908 374 V378.5 L905.5 381.5 H899.5 L896.5 378.5 V373.5 Z" fill="#e08018" stroke="#a01010" stroke-width="0.9"/>
<path d="M900 376 L902.5 371.5 M903 379.5 L906.5 375.5" stroke="#f8e020" stroke-width="1.5"/>
<circle cx="899.8" cy="378.5" r="0.8" fill="#8080f0"/>
<!-- hook -->
<path d="M900.5 390.5 Q896.5 393 897 398 Q898.5 403 903.5 402.5 Q906 402 910.5 397.5 L908.5 395 Q905 398.5 903.5 398.5 Q901 398 901 396 Q901 393 903 392 Z" fill="#f4d010" stroke="#c02010" stroke-width="0.9" stroke-linejoin="round"/>
<circle cx="901.5" cy="398.5" r="1" fill="#f08020"/>
<!-- L blue -->
<path d="M897 420.5 H901 V429.5 H911 V434 H898.5 Q897 434 897 432.5 Z" fill="#3070e8" stroke="#102080" stroke-width="0.8"/>
<path d="M899 421 V430 Q899 432 901 432 H910.5" stroke="#30d8f0" stroke-width="1" fill="none"/>
<path d="M901.3 430.5 Q902.5 427.5 905 427.5" stroke="#f0d010" stroke-width="1.6" fill="none"/>
<circle cx="901" cy="431" r="1.3" fill="#f08020"/>
<path d="M905 429.3 L910.5 429.3 L911 433.8" stroke="#30c0a0" stroke-width="0.8" fill="none"/>
<path d="M910.7 435.5 H914.5 L912.6 437.7 Z" fill="#000"/>
<!-- L yellow -->
<path d="M901 440.5 H905.5 V450.5 H902 Z" fill="#f0d010" stroke="#c02010" stroke-width="0.9"/>
<path d="M897.5 451 L900.5 448 H910.5 L907.5 455 H897.5 Z" fill="#30c0e0" stroke="#2040a0" stroke-width="0.8"/>
<path d="M901 449 Q901.5 452 904.5 452.5 L905.5 449" fill="#f0a010"/>
<path d="M897 445.5 L899.5 442.5" stroke="#222" stroke-width="0.8" stroke-dasharray="1 0.6"/>
<!-- U -->
<path d="M897 462 H901 V470.5 Q901 472 902.5 472 H907 V476.2 H900 Q897 476.2 897 473 Z" fill="#3070e8" stroke="#102080" stroke-width="0.8"/>
<path d="M899 462.5 V472 Q899 474.5 901.5 474.5 H906.5" stroke="#30d8f0" stroke-width="1" fill="none"/>
<path d="M903.5 474 Q906 470 907 466.5 H910.5 L910.5 470 Q909 474.5 906 476" fill="#f0d010" stroke="#c02010" stroke-width="0.8"/>
<path d="M903.5 462.5 L905.5 464.5" stroke="#222" stroke-width="0.8" stroke-dasharray="1 0.6"/>
<path d="M910.7 476.5 H914.5 L912.6 478.8 Z" fill="#000"/>
<!-- chevron -->
<path d="M909 485 L911.2 487.3 L913.4 485 M909 488.3 L911.2 490.6 L913.4 488.3" stroke="#b8b8c8" stroke-width="0.8" fill="none"/>
<!-- CATIA logo -->
<path d="M890 498.8 Q893.5 497.5 896.2 498.6 Q894.5 501.5 891.5 504" stroke="#e02030" stroke-width="1.3" fill="none"/>
<path d="M885.5 505.3 Q893 504 893.2 507 Q892.8 510.5 884 513.5 Q886.5 509.5 889 505.8" stroke="#3a2a90" stroke-width="1.5" fill="none"/>
<path d="M899.5 503.8 Q894.5 503.2 894.5 506 Q895 507.5 897.5 508 Q899 509.5 895.8 511.5 H892.5" stroke="#f0a020" stroke-width="1.3" fill="none"/>
<text x="888.3" y="518.3" font-size="6.3" font-weight="bold" font-style="italic" fill="#40309a" font-family="Liberation Sans" textLength="22.5" lengthAdjust="spacingAndGlyphs">CATIA</text>
<!-- status buttons icons -->
<rect x="876.6" y="526.8" width="5.4" height="5" fill="#e8e8f4" stroke="#9a9aa8" stroke-width="0.8"/>
<path d="M875.5 535.3 H885.5 V526.5" stroke="#8a8a98" stroke-width="0.9" fill="none"/>
<path d="M876 535.9 H886.1 V527" stroke="#fff" stroke-width="0.6" fill="none"/>
<circle cx="903.3" cy="530.3" r="3" fill="#e8e8f4" stroke="#9a9aa8" stroke-width="0.8"/>
<path d="M903.3 528.3 V532" stroke="#8a8a98" stroke-width="0.8"/>
<path d="M899.5 535.3 H909.5 V526.5" stroke="#8a8a98" stroke-width="0.9" fill="none"/>
<path d="M900 535.9 H910.1 V527" stroke="#fff" stroke-width="0.6" fill="none"/>
</svg>
<svg class="a" style="left:0;top:0" width="960" height="540" viewBox="0 0 960 540">
<defs>
<radialGradient id="burst2" cx="0.5" cy="0.5" r="0.5"><stop offset="0" stop-color="#fff0a0"/><stop offset="0.4" stop-color="#f0a030"/><stop offset="0.8" stop-color="#a03018"/><stop offset="1" stop-color="#000" stop-opacity="0"/></radialGradient>
<linearGradient id="mat" x1="0" y1="0" x2="1" y2="1"><stop offset="0" stop-color="#f0c020"/><stop offset="0.5" stop-color="#e05818"/><stop offset="1" stop-color="#b02010"/></linearGradient>
<linearGradient id="chip" x1="0" y1="0" x2="0" y2="1"><stop offset="0" stop-color="#6a5840"/><stop offset="0.45" stop-color="#907048"/><stop offset="0.7" stop-color="#b08850"/><stop offset="1" stop-color="#c8823a"/></linearGradient>
</defs>
<!-- windows -->
<g fill="#fdfdfd">
<path d="M928.9 7.1 L936.9 6.1 V13.1 H928.9 Z"/><path d="M937.8 6 L947.3 4.9 V13.1 H937.8 Z"/>
<path d="M928.9 13.8 H936.9 V21.1 L928.9 20.2 Z"/><path d="M937.8 13.8 H947.3 V22.9 L937.8 21.2 Z"/>
</g>
<!-- explorer -->
<path d="M927.5 37.5 Q927.5 35.8 929 35.8 H934 L935.5 37 H947 Q948.5 37 948.5 38.5 V54.5 H927.5 Z" fill="#e4c878"/>
<rect x="927.5" y="40.5" width="21" height="14" fill="#f4e2a0"/>
<rect x="929.5" y="36.5" width="2" height="1.6" fill="#20c020"/><rect x="935.5" y="37.8" width="1.8" height="1.5" fill="#d02020"/><rect x="941.3" y="39" width="1.8" height="1.5" fill="#2090e0"/>
<path d="M930 48 Q930 47 931 47 H946 Q947 47 947 48 V56 H942.5 V52 H934.5 V56 H930 Z" fill="#78c0ec" stroke="#5aa0d0" stroke-width="0.5"/>
<!-- record -->
<circle cx="938.2" cy="78.1" r="10.4" fill="#fff"/>
<circle cx="938.2" cy="78.1" r="8.8" fill="#e04010"/>
<circle cx="938.2" cy="78.1" r="7.3" fill="#fff"/>
<circle cx="938.2" cy="78.1" r="4.9" fill="#e84a10"/>
<!-- 3DS -->
<rect x="927" y="101" width="21.7" height="22.8" fill="#040308"/>
<circle cx="943" cy="111" r="6.5" fill="url(#burst2)"/>
<path d="M927.3 102.5 Q937 106 940.5 113 Q942.5 118 943.5 123.8 H940.2 Q939.5 118.5 937.5 114.5 Q934 108.5 927.3 105.8 Z" fill="#2a90e0"/>
<path d="M928 103.8 Q936.5 107.5 939.3 114 Q941 118 941.8 123.5" stroke="#60d0ff" stroke-width="0.8" fill="none"/>
<path d="M935.5 102.8 Q939.5 102.5 938.5 105.2 L936 107.5 M929.5 108.8 Q936.5 107.3 935.5 110.8 Q934 114 928.5 116 L932 108.8 M942 108 Q937.5 107.5 938 110.3 Q941.5 111.8 939 115 H935.5" stroke="#fff" stroke-width="1.1" fill="none"/>
<!-- A -->
<rect x="927" y="134.9" width="22" height="22.2" rx="3.5" fill="#f4cc10"/>
<path d="M927 134.9 H936 L929 157.1 H927 Z" fill="#f8e880" opacity="0.6"/>
<path d="M935.2 135 H942.3 L949 156.8 H944 L938.7 138.5 L932.3 156.8 H927.8 Z" fill="#1a1818"/>
<!-- matlab -->
<path d="M927.6 181.2 L934.5 176.5 L938 173.5 L941 178 L936 184 Z" fill="#3a98e0"/>
<path d="M935.5 177.8 L942.3 169.8 Q945 176 948.7 185.7 Q944 183 940.5 185 Q938.5 187 936.8 189.6 L933 182 Z" fill="url(#mat)"/>
<!-- SW -->
<path d="M927 205.5 L937 202.7 L948.7 205.3 V220.5 L938.5 222.3 L927 220 Z" fill="#d81c26"/>
<path d="M927 205.5 L937 202.7 L948.7 205.3 L938.5 208 Z" fill="#f04048"/>
<path d="M938.5 208 V222.3 L948.7 220.5 V205.3 Z" fill="#b81420"/>
<text x="928.8" y="218" font-size="11" font-weight="bold" fill="#fff" font-family="Liberation Sans" textLength="7.5" lengthAdjust="spacingAndGlyphs">S</text>
<text x="938.8" y="218" font-size="11" font-weight="bold" fill="#fff" font-family="Liberation Sans" textLength="9.3" lengthAdjust="spacingAndGlyphs">W</text>
<text x="932.8" y="224.2" font-size="7" font-weight="bold" fill="#fff" stroke="#202020" stroke-width="0.9" paint-order="stroke" font-family="Liberation Sans" textLength="16" lengthAdjust="spacingAndGlyphs">2016</text>
<!-- keyshot -->
<circle cx="938.2" cy="247.7" r="11.2" fill="#fff"/>
<circle cx="938.2" cy="247.7" r="10" fill="#2a8af0"/>
<g stroke="#fff" stroke-width="0.9" fill="none">
<path d="M934 244 L937 237.8 M942.5 243.5 L947.5 248 M941 251.5 L939.5 257.5 M934 251 L928.5 250 M937 243 L944 241"/>
</g>
<path d="M938.2 243.5 L941.8 245.6 V249.8 L938.2 251.9 L934.6 249.8 V245.6 Z" fill="#282828" stroke="#fff" stroke-width="0.8"/>
<!-- chrome button -->
<rect x="917.5" y="266" width="42" height="31" fill="url(#chip)" stroke="#9a8878" stroke-width="0.8" opacity="0.9"/>
<circle cx="938.5" cy="281.3" r="10" fill="#20a050"/>
<path d="M938.5 281.3 L929.8 276.3 A10 10 0 0 1 947.2 276.3 Z" fill="#e03828"/>
<path d="M938.5 281.3 L947.2 276.3 A10 10 0 0 1 938.5 291.3 Z" fill="#f8c818"/>
<circle cx="938.5" cy="281.3" r="4.6" fill="#fff"/>
<circle cx="938.5" cy="281.3" r="3.6" fill="#4080e8"/>
<!-- catia button -->
<rect x="917.5" y="299" width="42" height="32" fill="#d9b27a" stroke="#f4e2c4" stroke-width="1"/>
<rect x="927.5" y="304.5" width="20" height="20" fill="#fff"/>
<use href="#cat" x="928.6" y="305.6" width="17.8" height="17.8"/>
<!-- tray -->
<rect x="928.3" y="420.5" width="19.5" height="12" rx="1.5" fill="none" stroke="#fff" stroke-width="1.1"/>
<g fill="#fff"><rect x="930.5" y="423" width="1.6" height="1.4"/><rect x="933" y="423" width="1.6" height="1.4"/><rect x="935.5" y="423" width="1.6" height="1.4"/><rect x="938" y="423" width="1.6" height="1.4"/><rect x="940.5" y="423" width="1.6" height="1.4"/><rect x="943" y="423" width="1.6" height="1.4"/>
<rect x="930.5" y="425.5" width="1.6" height="1.4"/><rect x="933" y="425.5" width="1.6" height="1.4"/><rect x="935.5" y="425.5" width="1.6" height="1.4"/><rect x="938" y="425.5" width="1.6" height="1.4"/><rect x="940.5" y="425.5" width="1.6" height="1.4"/><rect x="943" y="425.5" width="1.6" height="1.4"/>
<rect x="930.5" y="428.3" width="1.6" height="1.4"/><rect x="933" y="428.3" width="10" height="1.4"/><rect x="943.5" y="428.3" width="1.6" height="1.4"/></g>
<path d="M927.5 447 V452.5 L923.8 449.8 Z" fill="#fff"/>
<rect x="922.2" y="462.2" width="1.5" height="9.8" fill="#fff"/><path d="M923.7 462.4 H928 V463.6 H933 L931.2 465.5 L933 467.4 H928 V466.4 H923.7 Z" fill="#f4f0ec"/>
<path d="M941.5 463 L944.5 465 L941.5 467 L939.5 465 Z M947.5 463 L950.5 465 L947.5 467 L944.5 465 Z M941.5 467.5 L944.5 469 L947.5 467.5 L944.5 471.5 Z" fill="#fff"/>
<path d="M923 479 V489 M925.3 479 V489" stroke="#fff" stroke-width="1"/>
<rect x="922.3" y="482" width="3.6" height="2.8" fill="#fff"/>
<rect x="927.2" y="478.2" width="5" height="10.5" rx="1" fill="none" stroke="#fff" stroke-width="1.1"/>
<g fill="#fff"><rect x="939.5" y="485.5" width="1.6" height="2"/><rect x="942" y="484" width="1.6" height="3.5"/><rect x="944.5" y="482.5" width="1.6" height="5"/><rect x="947" y="480.5" width="1.6" height="7"/><rect x="949.5" y="479.5" width="0.9" height="8" opacity="0.5"/></g>
<path d="M922.3 498 H924.5 L928 495.5 V504.5 L924.5 502 H922.3 Z" fill="#fff"/>
<path d="M929.5 497.8 Q931 500 929.5 502.2 M931.5 496.5 Q933.5 500 931.5 503.5" stroke="#fff" stroke-width="1" fill="none"/>
</svg>
</body></html>
